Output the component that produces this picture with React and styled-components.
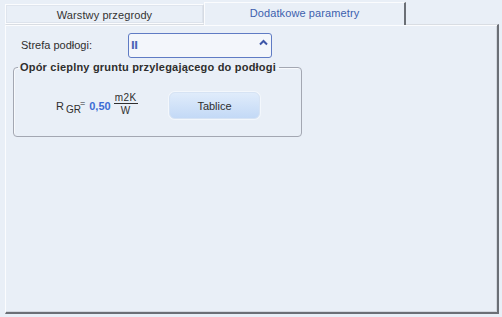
import React from 'react';
import styled, { createGlobalStyle } from 'styled-components';

const Global = createGlobalStyle`
  html, body {
    margin: 0;
    padding: 0;
    background: #e9eff7;
    font-family: 'Liberation Sans', Arial, sans-serif;
    font-size: 11px;
    color: #2e2e2e;
  }
`;

const Window = styled.div`
  width: 502px;
  height: 317px;
  box-sizing: border-box;
  padding: 2px 3px 3px 5px;
  display: flex;
  flex-direction: column;
`;

const TabRow = styled.div`
  display: flex;
  align-items: flex-end;
  height: 22px;
  position: relative;
  z-index: 1;
`;

const Tab = styled.div`
  box-sizing: border-box;
  width: ${p => p.$w}px;
  height: ${p => (p.$active ? 23 : 20)}px;
  margin-bottom: ${p => (p.$active ? -1 : 0)}px;
  display: flex;
  align-items: ${p => (p.$active ? 'flex-start' : 'center')};
  justify-content: center;
  padding-top: ${p => (p.$active ? 4 : 1)}px;
  background: #e9eff7;
  color: ${p => (p.$active ? '#3d5fae' : '#333')};
  border-top: 1px solid #fbfcfe;
  border-left: 1px solid #fbfcfe;
  border-right: ${p => (p.$active ? '2px solid #6b6f76' : '1px solid #d6dbe3')};
  border-bottom: ${p => (p.$active ? 'none' : '1px solid #fbfcfe')};
  box-shadow: ${p => (p.$active ? 'none' : 'inset -1px -1px 0 #dde3ec, inset 1px 1px 0 #dfe5ee')};
  letter-spacing: 0.1px;
`;

const Panel = styled.div`
  flex: 1;
  box-sizing: border-box;
  background: #e9eff7;
  border-top: 1px solid #d9dde3;
  border-left: 1px solid #fbfcfe;
  border-right: 2px solid #6b6f76;
  border-bottom: 2px solid #6b6f76;
  box-shadow: inset 0 1px 0 #fbfcfe, inset -1px -1px 0 #d2d7df;
  padding: 8px 0 0 7px;
`;

const FieldRow = styled.div`
  display: flex;
  align-items: center;
  height: 25px;
`;

const Label = styled.div`
  width: 115px;
  padding-left: 8px;
  box-sizing: border-box;
  padding-bottom: 2px;
`;

const Select = styled.div`
  box-sizing: border-box;
  width: 144px;
  height: 25px;
  border: 1px solid #5f7bc4;
  border-radius: 3px;
  background: #f3f6fb;
  display: flex;
  align-items: center;
  justify-content: space-between;
  padding: 0 3px 6px 2px;
`;

const SelectValue = styled.span`
  color: #4a62b6;
  font-family: 'DejaVu Sans', sans-serif;
  font-weight: bold;
  font-size: 10px;
  letter-spacing: -0.5px;
  margin-top: 5px;
`;

const Group = styled.fieldset`
  margin: 3px 0 0 0;
  width: 289px;
  box-sizing: border-box;
  padding: 0 0 17px 0;
  border: 1px solid #a3a7b2;
  border-radius: 4px;
  box-shadow: inset 1px 1px 0 #f7f9fc;
`;

const Legend = styled.legend`
  margin-left: 4px;
  padding: 0 3px 0 2px;
  font-weight: bold;
  font-size: 11px;
  color: #2e2e2e;
  letter-spacing: 0.2px;
`;

const GroupBody = styled.div`
  display: flex;
  align-items: center;
  padding: 18px 0 0 42px;
`;

const Formula = styled.div`
  display: flex;
  align-items: center;
  width: 113px;
`;

const Sym = styled.span`
  font-size: 11px;
  margin-top: 1px;
`;

const Sub = styled.span`
  font-size: 10px;
  margin: 9px 0 0 2px;
`;

const Eq = styled.span`
  font-size: 9px;
  margin: -4px 0 0 -1px;
`;

const Value = styled.span`
  color: #3c6bd4;
  font-weight: bold;
  font-size: 11px;
  margin: 1px 3px 0 4px;
`;

const Fraction = styled.span`
  display: inline-flex;
  flex-direction: column;
  align-items: center;
  font-size: 10px;
  line-height: 9px;
  margin-top: -2px;
  letter-spacing: 0.5px;
`;

const Numer = styled.span`
  border-bottom: 1px solid #2e2e2e;
  padding: 0 1px 1px;
`;

const Denom = styled.span`
  padding-top: 2px;
`;

const Button = styled.button`
  width: 91px;
  height: 27px;
  margin-top: 1px;
  border: 1px solid #d6e3f4;
  border-radius: 6px;
  background: linear-gradient(#e0ecfb, #c3d9f6);
  box-shadow: 0 0 0 1px #f3f7fc;
  font-family: inherit;
  font-size: 11px;
  color: #2e2e2e;
  padding: 0;
`;

const Caret = () => (
  <svg width="9" height="7" viewBox="0 0 9 7">
    <path d="M1 5.5 L4.5 2 L8 5.5" fill="none" stroke="#3d56a8" strokeWidth="2" />
  </svg>
);

export default function App() {
  return (
    <>
      <Global />
      <Window>
        <TabRow>
          <Tab $w={199}>Warstwy przegrody</Tab>
          <Tab $w={202} $active>Dodatkowe parametry</Tab>
        </TabRow>
        <Panel>
          <FieldRow>
            <Label>Strefa podłogi:</Label>
            <Select>
              <SelectValue>II</SelectValue>
              <Caret />
            </Select>
          </FieldRow>
          <Group>
            <Legend>Opór cieplny gruntu przylegającego do podłogi</Legend>
            <GroupBody>
              <Formula>
                <Sym>R</Sym>
                <Sub>GR</Sub>
                <Eq>=</Eq>
                <Value>0,50</Value>
                <Fraction>
                  <Numer>m2K</Numer>
                  <Denom>W</Denom>
                </Fraction>
              </Formula>
              <Button>Tablice</Button>
            </GroupBody>
          </Group>
        </Panel>
      </Window>
    </>
  );
}
